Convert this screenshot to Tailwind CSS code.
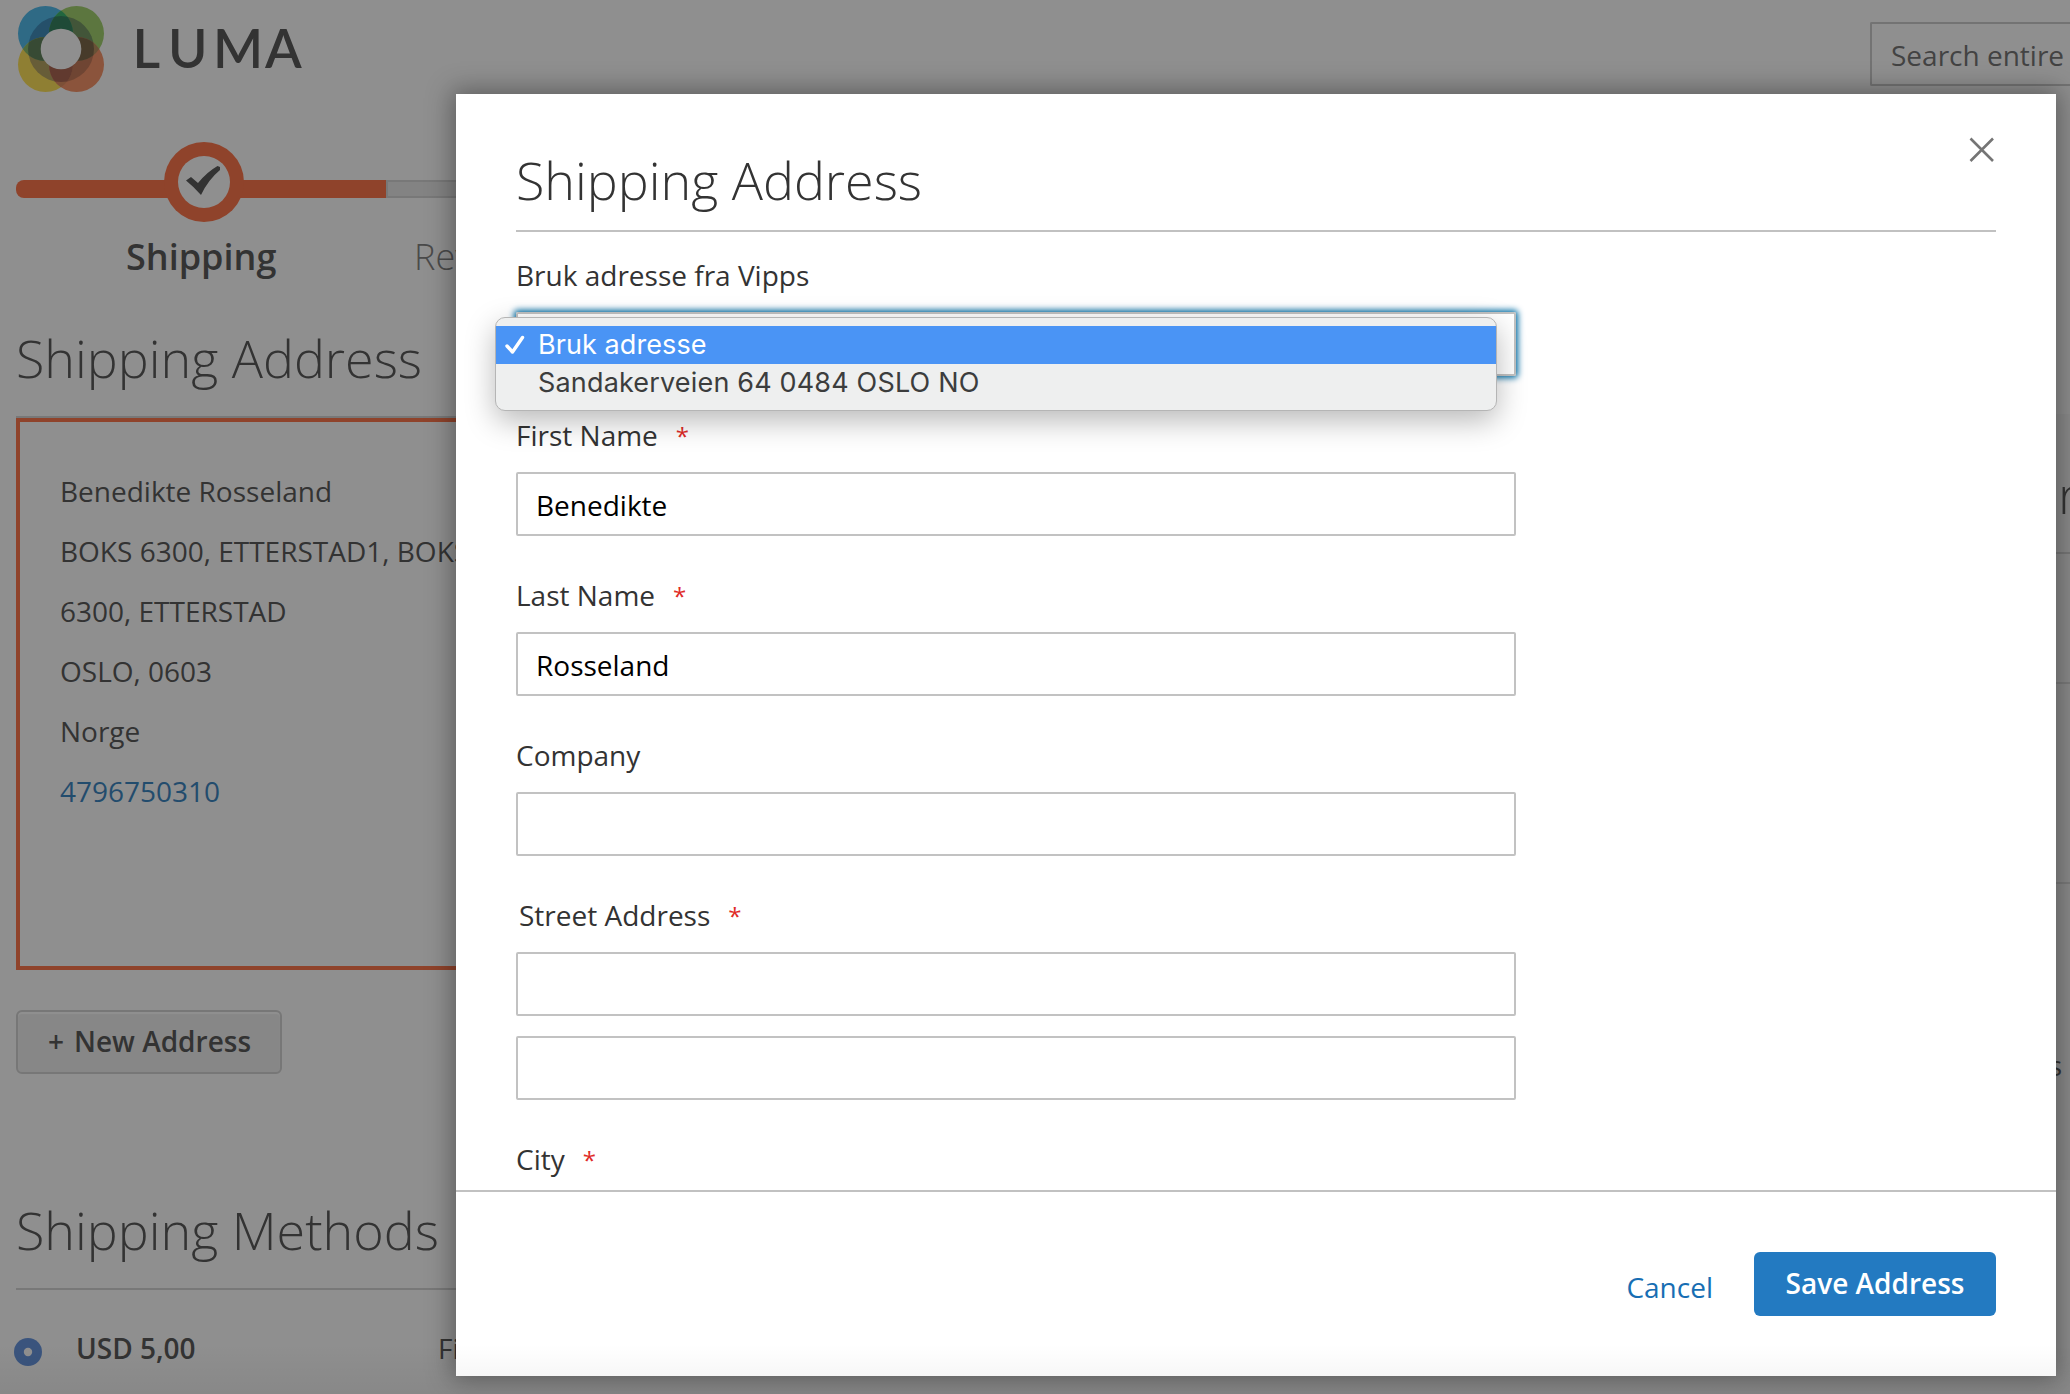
<!DOCTYPE html>
<html lang="en">
<head>
<meta charset="utf-8">
<title>Shipping</title>
<script src="https://cdn.jsdelivr.net/npm/@tailwindcss/browser@4"></script>
</head>
<body class="bg-white">
<div class="relative w-[2070px] h-[1394px] overflow-hidden font-['Open_Sans',sans-serif] text-[28px] leading-[40px] text-[#333]">

  <!-- Checkout page -->
  <div class="flex flex-col h-full">
    <header class="flex justify-between h-[142px] shrink-0">
      <svg class="block w-[330px] h-[110px]" viewBox="0 0 330 110">
        <defs>
          <clipPath id="tl"><circle cx="45.5" cy="33.5" r="27.5"/></clipPath>
          <clipPath id="tr"><circle cx="76.5" cy="33.5" r="27.5"/></clipPath>
          <clipPath id="bl"><circle cx="45.5" cy="64.5" r="27.5"/></clipPath>
          <clipPath id="br"><circle cx="76.5" cy="64.5" r="27.5"/></clipPath>
          <clipPath id="ring"><circle cx="61" cy="49" r="33"/></clipPath>
        </defs>
        <!-- petals -->
        <circle cx="45.5" cy="33.5" r="27.5" fill="#2aade9"/>
        <circle cx="76.5" cy="33.5" r="27.5" fill="#8ec84e"/>
        <circle cx="45.5" cy="64.5" r="27.5" fill="#ffdc33"/>
        <circle cx="76.5" cy="64.5" r="27.5" fill="#f67c47"/>
        <!-- inner ring -->
        <circle cx="61" cy="49" r="33" fill="#1473ad" clip-path="url(#tl)"/>
        <circle cx="61" cy="49" r="33" fill="#547e42" clip-path="url(#tr)"/>
        <circle cx="61" cy="49" r="33" fill="#a6903e" clip-path="url(#bl)"/>
        <circle cx="61" cy="49" r="33" fill="#b85b33" clip-path="url(#br)"/>
        <!-- overlaps -->
        <circle cx="45.500" cy="33.500" r="27.500" fill="#0fa54e" clip-path="url(#tr)"/>
        <circle cx="45.500" cy="33.500" r="27.500" fill="#6fae4a" clip-path="url(#bl)"/>
        <circle cx="76.500" cy="33.500" r="27.500" fill="#a9773a" clip-path="url(#br)"/>
        <circle cx="45.500" cy="64.500" r="27.500" fill="#d8733c" clip-path="url(#br)"/>
        <g clip-path="url(#ring)">
          <circle cx="45.500" cy="33.500" r="27.500" fill="#07663c" clip-path="url(#tr)"/>
          <circle cx="45.500" cy="33.500" r="27.500" fill="#3c6635" clip-path="url(#bl)"/>
          <circle cx="76.500" cy="33.500" r="27.500" fill="#5f4521" clip-path="url(#br)"/>
          <circle cx="45.500" cy="64.500" r="27.500" fill="#99432c" clip-path="url(#br)"/>
        </g>
        <circle cx="61" cy="49" r="20.3" fill="#fff"/>
        <text y="67.500" x="132.500 168 213 265" font-family="Lato" font-weight="600" font-size="53.500" fill="#333">LUMA</text>
      </svg>
      <div class="mt-[22px] w-[200px] h-[64px] border-2 border-r-0 border-[#c2c2c2] rounded-l-[2px] pl-[19px] pt-[11px] text-[#575757] whitespace-nowrap">Search entire</div>
    </header>

    <div class="flex justify-between flex-1 min-h-0">
      <main class="w-[1000px] pl-[16px]">
        <!-- Progress -->
        <div class="relative flex h-[80px] items-start">
          <div class="mt-[38px] w-[370px] h-[18px] rounded-l-[8px] bg-[#ff5722]"></div>
          <div class="mt-[38px] w-[372px] h-[18px] bg-[#e4e4e4] border-2 border-[#ccc]"></div>
          <svg class="absolute left-[148px] top-0 w-[80px] h-[80px]" viewBox="0 0 80 80">
            <circle cx="40" cy="40" r="40" fill="#ff5722"/>
            <circle cx="40" cy="40" r="26" fill="#fff"/>
            <path d="M22 38.500L27 35L34 41Q43 30 53.500 24L56 25L56 28Q44 38 37 53Q30 45 22 38.500Z" fill="#333"/>
          </svg>
        </div>
        <div class="flex mt-[10px] text-[36px] leading-[50px] whitespace-nowrap">
          <span class="w-[398px] pl-[110px] font-semibold">Shipping</span>
          <span class="font-light text-[#666]">Review</span>
        </div>

        <h2 class="mt-[40px] h-[96px] border-b-2 border-[#ccc] text-[52px] leading-[72px] font-light">Shipping Address</h2>
        <div class="h-[552px] border-4 border-[#ff5722] pt-[39px] pl-[40px] leading-[60px] whitespace-nowrap">
          <p>Benedikte Rosseland</p>
          <p>BOKS 6300, ETTERSTAD1, BOKS</p>
          <p>6300, ETTERSTAD</p>
          <p>OSLO, 0603</p>
          <p>Norge</p>
          <p class="text-[#0e6cb4]">4796750310</p>
        </div>
        <div class="mt-[40px] w-[266px] h-[64px] rounded-[6px] border-2 border-[#c9c9c9] bg-[#eee] shadow-[inset_0_2px_1px_#fff] pt-[9px] pl-[30px] font-semibold whitespace-nowrap flex gap-[8px]"><span class="w-[18px]">+</span><span>New Address</span></div>

        <h2 class="mt-[120px] h-[96px] border-b-2 border-[#ccc] text-[52px] leading-[72px] font-light">Shipping Methods</h2>
        <div class="flex mt-[38px] whitespace-nowrap">
          <svg class="-ml-[2px] mt-[10px] w-[28px] h-[28px]" viewBox="0 0 28 28"><circle cx="14" cy="14" r="14" fill="#447dd8"/><circle cx="14" cy="14" r="4.200" fill="#fff"/></svg>
          <span class="ml-[34px] w-[362px] font-semibold">USD 5,00</span>
          <span>Fixed</span>
        </div>
      </main>

      <!-- Order summary -->
      <aside class="mt-[272px] w-[660px] h-[766px] bg-[#f5f5f5]">
        <div class="flex justify-end h-[140px] border-b-2 border-[#ccc] pt-[44px] text-[52px] leading-[72px] font-light"><span class="w-[12px]">r</span></div>
        <div class="h-[130px] border-b-2 border-[#d5d5d5]"></div>
        <div class="h-[200px] border-b-2 border-[#d5d5d5]"></div>
        <div class="pt-[161px] pr-[8px] text-right">s</div>
      </aside>
    </div>
  </div>

  <div class="absolute inset-0 bg-[#333]/55"></div>

  <!-- Dialog -->
  <section class="absolute left-[456px] top-[94px] w-[1600px] h-[1282px] bg-white shadow-[0_0_24px_4px_rgba(0,0,0,0.35)] flex flex-col">
    <div class="flex-1 min-h-0 px-[60px]">
      <div class="flex justify-between h-[138px] border-b-2 border-[#c1c1c1]">
        <h1 class="mt-[50px] text-[52px] leading-[72px] font-light whitespace-nowrap">Shipping Address</h1>
        <svg class="mt-[43px] mr-[1px] w-[26px] h-[26px]" viewBox="0 0 26 26"><path d="M1.500 1.500L24 24M24 1.500L1.500 24" stroke="#757575" stroke-width="2.600" fill="none"/></svg>
      </div>
      <div class="mt-[23px]">Bruk adresse fra Vipps</div>
      <div class="relative mt-[17px] w-[1000px] h-[64px] border-2 border-[#c2c2c2] rounded-[2px] shadow-[0_0_6px_2px_#006da5]">
        <div class="absolute z-10 -left-[23px] top-[3px] w-[1002px] h-[94px] rounded-[10px] border border-[#b5b5b5] bg-[#eeefef] shadow-[0_10px_30px_rgba(0,0,0,0.28)] font-['Inter',sans-serif] whitespace-nowrap text-[27px] leading-[38px] pt-[8px]">
          <div class="flex h-[38px] bg-[#4a94f5] text-white">
            <svg class="ml-[9px] mt-[9px] mr-[13px] w-[20px] h-[20px]" viewBox="0 0 20 20"><path d="M2 11L7.500 17L17.500 2.500" fill="none" stroke="#fff" stroke-width="3.400" stroke-linecap="round" stroke-linejoin="round"/></svg>
            <span class="tracking-[0.08px]">Bruk adresse</span>
          </div>
          <div class="pl-[42px] text-[#3c3d3d] tracking-[0.17px]">Sandakerveien 64 0484 OSLO NO</div>
        </div>
      </div>
      <div class="mt-[39px] flex">First Name<span class="ml-[18px] pt-px text-[24px] text-[#e02b27]">*</span></div>
      <div class="mt-[16px] w-[1000px] h-[64px] border-2 border-[#c2c2c2] rounded-[2px] pt-[11px] pl-[18px] text-black">Benedikte</div>
      <div class="mt-[39px] flex">Last Name<span class="ml-[18px] pt-px text-[24px] text-[#e02b27]">*</span></div>
      <div class="mt-[16px] w-[1000px] h-[64px] border-2 border-[#c2c2c2] rounded-[2px] pt-[11px] pl-[18px] text-black">Rosseland</div>
      <div class="mt-[39px]">Company</div>
      <div class="mt-[17px] w-[1000px] h-[64px] border-2 border-[#c2c2c2] rounded-[2px]"></div>
      <div class="mt-[39px] pl-[3px] flex">Street Address<span class="ml-[18px] pt-px text-[24px] text-[#e02b27]">*</span></div>
      <div class="mt-[16px] w-[1000px] h-[64px] border-2 border-[#c2c2c2] rounded-[2px]"></div>
      <div class="mt-[20px] w-[1000px] h-[64px] border-2 border-[#c2c2c2] rounded-[2px]"></div>
      <div class="mt-[39px] flex">City<span class="ml-[18px] pt-px text-[24px] text-[#e02b27]">*</span></div>
    </div>
    <div class="flex justify-end h-[186px] shrink-0 border-t-2 border-[#c1c1c1] pr-[60px] pt-[60px]">
      <span class="mt-[15px] mr-[41px] text-[#176eb3]">Cancel</span>
      <div class="w-[242px] h-[64px] rounded-[6px] bg-[#237ac1] text-white font-semibold text-center pt-[11px] whitespace-nowrap">Save Address</div>
    </div>
  </section>

  <div class="absolute inset-x-0 bottom-0 h-[50px] bg-linear-to-b from-transparent to-black/5"></div>
</div>
</body>
</html>
